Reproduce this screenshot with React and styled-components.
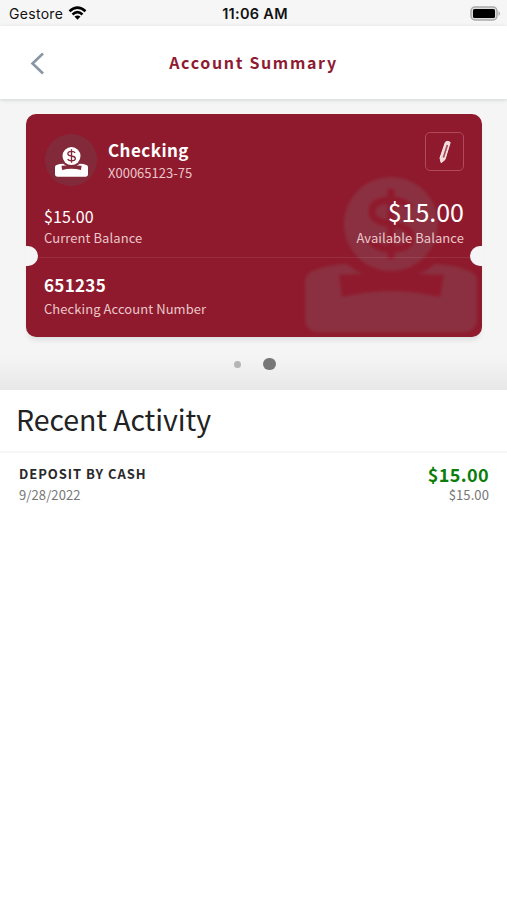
import React from "react";
import styled, { createGlobalStyle } from "styled-components";

const GlobalStyle = createGlobalStyle`
  * {
    box-sizing: border-box;
  }

  body {
    margin: 0;
    background: #fff;
    font-family: "Noto Sans CJK SC", "Noto Sans", sans-serif;
  }
`;

const Screen = styled.div`
  min-height: 900px;
  background: #fff;
  overflow: hidden;
`;

const StatusBar = styled.div`
  display: grid;
  grid-template-columns: 1fr auto 1fr;
  align-items: center;
  height: 26px;
  padding: 1px 6px 0 9px;
  background: #f6f6f6;
  color: #111;
  font-family: Inter, sans-serif;
  font-size: 14px;
  line-height: 20px;
`;

const Carrier = styled.div`
  display: flex;
  align-items: center;
  gap: 5px;
  letter-spacing: 0.3px;

  svg {
    margin-bottom: 1px;
  }
`;

const Clock = styled.div`
  font-weight: 600;
  font-size: 14.5px;
  letter-spacing: 0.3px;
`;

const BatteryIcon = styled.svg`
  justify-self: end;
  display: block;
  margin-bottom: 1px;
`;

const Header = styled.header`
  position: relative;
  display: grid;
  grid-template-columns: 60px 1fr 60px;
  align-items: center;
  height: 73px;
  background: #fff;
  box-shadow: 0 1px 4px rgba(60, 80, 80, 0.2);
`;

const BackButton = styled.button`
  display: flex;
  padding: 2px 0 0 30px;
  border: 0;
  background: none;
`;

const Title = styled.h1`
  margin: 0;
  padding-bottom: 1px;
  color: #8e1b32;
  text-align: center;
  font-size: 16px;
  line-height: 24px;
  font-weight: 700;
  letter-spacing: 1.65px;
`;

const Carousel = styled.section`
  height: 291px;
  padding: 15px 25px 0 26px;
  background: linear-gradient(#f5f5f5 88%, #e8e8e8 100%);
`;

const Card = styled.article`
  position: relative;
  height: 223px;
  border-radius: 10px;
  background: #8f1a2d;
  color: #fff;
  box-shadow: 0 5px 5px -2px rgba(60, 70, 90, 0.13);
`;

const Watermark = styled.div`
  position: absolute;
  left: 279px;
  top: 63px;
  filter: blur(1.8px);
`;

// Punched hole on the card's edge, at the height of the divider
const Notch = styled.span`
  position: absolute;
  top: 132px;
  ${({ $side }) => $side}: -1px;
  width: 13px;
  height: 20px;
  background: #f5f5f5;
  border-radius: ${({ $side }) =>
    $side === "left" ? "0 10px 10px 0" : "10px 0 0 10px"};
`;

const CardTop = styled.div`
  position: relative;
  height: 144px;
  padding: 17px 18px 0;
  border-bottom: 1px solid rgba(255, 255, 255, 0.09);
`;

const CardBottom = styled.div`
  position: relative;
  padding: 15px 18px 0;
`;

const AccountRow = styled.div`
  display: flex;
  align-items: flex-start;
  height: 64px;
`;

const Avatar = styled.div`
  display: flex;
  justify-content: center;
  align-items: center;
  width: 52px;
  height: 52px;
  margin: 3px 11px 0 1px;
  padding-top: 4px;
  border-radius: 50%;
  background: #832a3a;
`;

const AccountName = styled.div`
  flex: 1;
  padding-top: 6px;
`;

const EditButton = styled.button`
  display: flex;
  justify-content: center;
  align-items: center;
  width: 39px;
  height: 39px;
  margin-top: 1px;
  padding: 0;
  border: 1px solid #b04a5c;
  border-radius: 5px;
  background: none;
`;

const BalanceRow = styled.div`
  display: flex;
  justify-content: space-between;
  align-items: flex-end;
`;

const Balance = styled.div`
  text-align: ${({ $align }) => $align || "left"};
`;

const Text = styled.div`
  color: ${({ $color }) => $color || "inherit"};
  font-size: ${({ $size }) => $size}px;
  line-height: ${({ $line }) => $line}px;
  font-weight: ${({ $weight }) => $weight || 400};
  letter-spacing: ${({ $spacing }) => $spacing || 0}px;
  white-space: nowrap;
`;

const Dots = styled.div`
  display: flex;
  align-items: center;
  gap: 22px;
  height: 12px;
  margin: 21px 0 0 208px;
`;

const Dot = styled.span`
  width: ${({ $active }) => ($active ? 12.5 : 7)}px;
  height: ${({ $active }) => ($active ? 12.5 : 7)}px;
  border-radius: 50%;
  background: ${({ $active }) => ($active ? "#777" : "#b5b5b5")};
`;

const SectionTitle = styled.h2`
  height: 63px;
  margin: 0;
  padding: 9px 16px 0;
  border-bottom: 2px solid #f7f7f7;
  color: #222;
  font-size: 28.5px;
  line-height: 40px;
  font-weight: 400;
  letter-spacing: -0.08px;
`;

const Transaction = styled.div`
  display: flex;
  justify-content: space-between;
  padding: 10px 18px 0 19px;
`;

const Details = styled.div`
  padding-top: 1px;
`;

const Amounts = styled.div`
  text-align: right;
`;

function DepositIcon({ width, color, cut }) {
  return (
    <svg width={width} height={(width * 156) / 172} viewBox="0 0 172 156">
      <path
        d="M0 104Q0 97 8 94Q24 87 44 87L128 87Q148 87 164 94Q172 97 172 104V141Q172 155 158 155H14Q0 155 0 141Z"
        fill={color}
      />
      <path
        d="M40 85Q50 95 60 97L34 98L37 120Q86 108 135 120L139 98L112 97Q122 95 132 85Z"
        fill={cut}
      />
      <circle cx="86" cy="47" r="47" fill={color} />
      <path
        d="M105 31Q100 23 86 23Q67 23 67 35Q67 44 86 47Q106 50 106 60Q106 72 86 72Q71 72 66 63M86 12V82"
        fill="none"
        stroke={cut}
        strokeWidth="7"
      />
    </svg>
  );
}

function WifiIcon() {
  return (
    <svg width="19" height="14" viewBox="0 0 18 14">
      <g fill="none" stroke="#000" strokeWidth="2.6">
        <path d="M1 5.2Q9 -2 17 5.2" />
        <path d="M4 8.4Q9 4 14 8.4" />
      </g>
      <path d="M6 10.6Q9 8.2 12 10.6L9 13.8Z" />
    </svg>
  );
}

function PencilIcon() {
  return (
    <svg width="12" height="24" viewBox="0 0 12 24">
      <path
        d="M6.4 2.2Q8.8 .4 11.2 2.4L6 19.5L2.2 22.8L1 18Z"
        fill="#f3d9da"
        stroke="#f8e8e8"
        strokeLinejoin="round"
      />
      <path d="M8.4 5L4.4 17.6" stroke="#a34b58" strokeWidth="1.6" />
    </svg>
  );
}

export default function App() {
  return (
    <Screen>
      <GlobalStyle />
      <StatusBar>
        <Carrier>
          Gestore <WifiIcon />
        </Carrier>
        <Clock>11:06 AM</Clock>
        <BatteryIcon width="31" height="15" viewBox="0 0 31 15">
          <rect x="1" y="1" width="26" height="13" rx="4" fill="#ddd" stroke="#aaa" strokeWidth="1.5" />
          <rect x="3" y="3" width="22" height="9" rx="1.5" />
          <path d="M28.5 5Q31.5 7.5 28.5 10Z" fill="#aaa" />
        </BatteryIcon>
      </StatusBar>
      <Header>
        <BackButton aria-label="Back">
          <svg width="15" height="23" viewBox="0 0 15 23">
            <path d="M13 1.5L2.5 11.5L13 21.5" fill="none" stroke="#8896a5" strokeWidth="2.6" />
          </svg>
        </BackButton>
        <Title>Account Summary</Title>
      </Header>
      <Carousel>
        <Card>
          <Watermark>
            <DepositIcon width={172} color="#8b3040" cut="#8f1a2d" />
          </Watermark>
          <CardTop>
            <AccountRow>
              <Avatar>
                <DepositIcon width={33} color="#fff" cut="#832a3a" />
              </Avatar>
              <AccountName>
                <Text $size={17} $line={26} $weight={700} $spacing={0.45}>
                  Checking
                </Text>
                <Text $size={13} $line={20} $color="#eac6ca">
                  X00065123-75
                </Text>
              </AccountName>
              <EditButton aria-label="Edit account">
                <PencilIcon />
              </EditButton>
            </AccountRow>
            <BalanceRow>
              <Balance>
                <Text $size={16} $line={23} $spacing={0.15}>$15.00</Text>
                <Text $size={13} $line={20} $spacing={0.07} $color="#eac6ca">
                  Current Balance
                </Text>
              </Balance>
              <Balance $align="right">
                <Text $size={25} $line={33}>$15.00</Text>
                <Text $size={13} $line={20} $spacing={0.07} $color="#eac6ca">
                  Available Balance
                </Text>
              </Balance>
            </BalanceRow>
          </CardTop>
          <CardBottom>
            <Text $size={17} $line={24} $weight={700} $spacing={0.3}>
              651235
            </Text>
            <Text $size={13} $line={23} $spacing={0.07} $color="#eac6ca">
              Checking Account Number
            </Text>
          </CardBottom>
          <Notch $side="left" />
          <Notch $side="right" />
        </Card>
        <Dots>
          <Dot />
          <Dot $active />
        </Dots>
      </Carousel>
      <SectionTitle>Recent Activity</SectionTitle>
      <Transaction>
        <Details>
          <Text $size={13} $line={20} $weight={700} $spacing={0.95} $color="#292929">
            DEPOSIT BY CASH
          </Text>
          <Text $size={13} $line={22} $spacing={0.1} $color="#777">
            9/28/2022
          </Text>
        </Details>
        <Amounts>
          <Text $size={18} $line={22} $weight={700} $spacing={0.4} $color="#0b7d0b">
            $15.00
          </Text>
          <Text $size={13} $line={20} $spacing={0.1} $color="#777">
            $15.00
          </Text>
        </Amounts>
      </Transaction>
    </Screen>
  );
}
